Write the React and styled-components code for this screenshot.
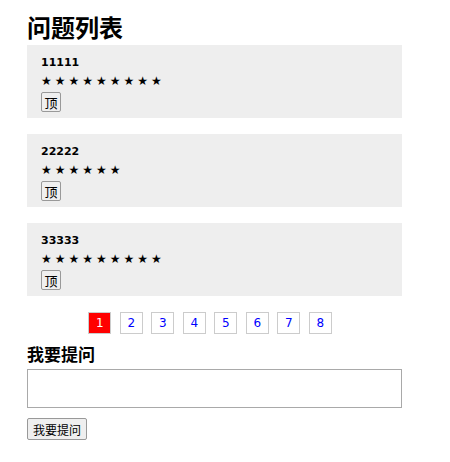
import React from "react";
import styled, { createGlobalStyle } from "styled-components";

const Global = createGlobalStyle`
  body { margin: 0; font-family: "DejaVu Sans", "Noto Sans CJK SC", sans-serif; background: #fff; color: #000; }
`;

const Page = styled.div`
  width: 375px;
  padding: 12px 0 0 27px;
`;

const Title = styled.h1`
  margin: 0 0 3px;
  font-size: 24px;
  line-height: 30px;
  font-weight: bold;
  font-family: "Noto Sans CJK SC", sans-serif;
`;

const List = styled.div`
  display: flex;
  flex-direction: column;
  gap: 16px;
`;

const Card = styled.div`
  background: #eeeeee;
  height: 73px;
  box-sizing: border-box;
  padding: 9px 14px 0;
`;

const QTitle = styled.div`
  font-size: 11px;
  font-weight: bold;
  line-height: 18px;
`;

const Stars = styled.div`
  font-size: 12px;
  line-height: 18px;
  letter-spacing: 3px;
`;

const TopButton = styled.button`
  width: 20px;
  height: 20px;
  padding: 0;
  margin-top: 2px;
  font-size: 13px;
  font-family: "Noto Sans CJK SC", sans-serif;
  background: #efefef;
  border: 1px solid #999;
  border-radius: 2px;
  display: flex;
  align-items: center;
  justify-content: center;
`;

const Pager = styled.div`
  display: flex;
  justify-content: center;
  gap: 8.5px;
  margin: 16px 0 0 -9px;
`;

const PageLink = styled.span`
  width: 23px;
  height: 22px;
  box-sizing: border-box;
  border: 1px solid #ccc;
  display: flex;
  align-items: center;
  justify-content: center;
  font-size: 12px;
  color: ${(p) => (p.$active ? "#fff" : "#00f")};
  background: ${(p) => (p.$active ? "#f00" : "#fff")};
`;

const SubTitle = styled.h2`
  margin: 9px 0 4px;
  font-size: 17px;
  line-height: 22px;
  font-weight: bold;
  font-family: "Noto Sans CJK SC", sans-serif;
`;

const Area = styled.textarea`
  display: block;
  width: 375px;
  height: 39px;
  box-sizing: border-box;
  border: 1px solid #a9a9a9;
  resize: none;
  margin: 0;
`;

const Submit = styled.button`
  margin-top: 10px;
  height: 22px;
  padding: 0 5px;
  font-size: 12px;
  font-family: "Noto Sans CJK SC", sans-serif;
  background: #efefef;
  border: 1px solid #999;
  border-radius: 2px;
`;

const questions = [
  { title: "11111", stars: 9 },
  { title: "22222", stars: 6 },
  { title: "33333", stars: 9 },
];

export default function App() {
  return (
    <>
      <Global />
      <Page>
        <Title>问题列表</Title>
        <List>
          {questions.map((q) => (
            <Card key={q.title}>
              <QTitle>{q.title}</QTitle>
              <Stars>{"★".repeat(q.stars)}</Stars>
              <TopButton>顶</TopButton>
            </Card>
          ))}
        </List>
        <Pager>
          {[1, 2, 3, 4, 5, 6, 7, 8].map((n) => (
            <PageLink key={n} $active={n === 1}>{n}</PageLink>
          ))}
        </Pager>
        <SubTitle>我要提问</SubTitle>
        <Area />
        <Submit>我要提问</Submit>
      </Page>
    </>
  );
}
